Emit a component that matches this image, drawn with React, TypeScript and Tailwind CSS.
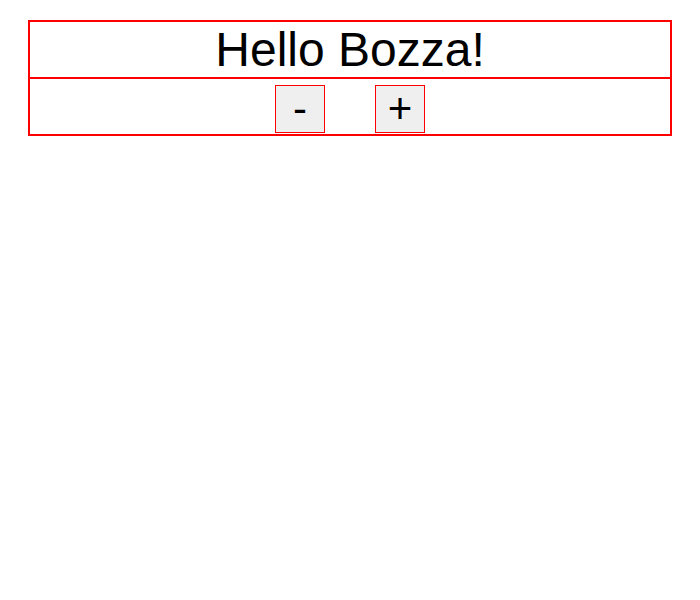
export default function App() {
  return (
    <div className="bg-white w-[700px] h-[600px] pt-[20px] px-[28px]" style={{ fontFamily: '"Liberation Sans", Arial, sans-serif' }}>
      <div className="border-2 border-[#ff0000] text-black">
        <div className="h-[57px] flex items-center justify-center text-[48px] leading-[55px] border-b-2 border-[#ff0000]">
          Hello Bozza!
        </div>
        <div className="h-[55px] flex items-start justify-center gap-[50px] pt-[6px]">
          <button className="w-[50px] h-[48px] border border-[#ff0000] bg-[#efefef] text-[42px] leading-none flex items-center justify-center p-0">
            -
          </button>
          <button className="w-[50px] h-[48px] border border-[#ff0000] bg-[#efefef] text-[42px] leading-none flex items-center justify-center p-0">
            +
          </button>
        </div>
      </div>
    </div>
  );
}
